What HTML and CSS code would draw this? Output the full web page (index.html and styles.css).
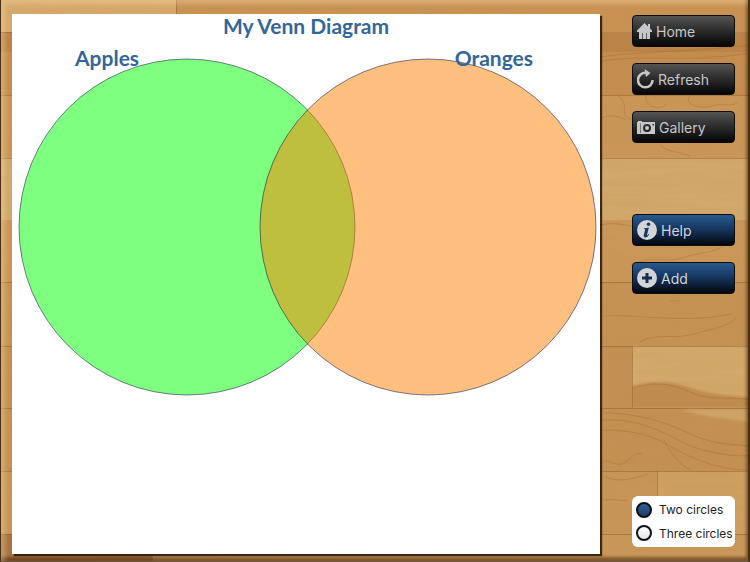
FILE: index.html
```
<!DOCTYPE html>
<html lang="en">
<head>
  <meta charset="utf-8">
  <meta name="viewport" content="width=device-width, initial-scale=1">
  <title>My Venn Diagram</title>
  <link rel="stylesheet" href="styles.css">
</head>
<body>
  <!-- Wooden desk -->
  <svg class="wood" viewBox="0 0 750 562" preserveAspectRatio="none" aria-hidden="true">
    <defs>
      <filter id="grain" x="0" y="0" width="100%" height="100%">
        <feTurbulence type="fractalNoise" baseFrequency="0.012 0.16" numOctaves="3" seed="4"/>
        <feColorMatrix values="0 0 0 0 0.5  0 0 0 0 0.27  0 0 0 0 0.08  0.9 0 0 0 -0.3"/>
      </filter>
      <filter id="soft" x="-5%" y="-5%" width="110%" height="110%"><feGaussianBlur stdDeviation="1"/></filter>
    </defs>
    <rect width="750" height="562" fill="#c69557"/>
    <rect width="176" height="32" fill="#d6a96c"/>
    <rect x="176" width="574" height="32" fill="#c89253"/>
    <rect y="32" width="750" height="20" fill="#bc8348"/>
    <rect y="52" width="750" height="43" fill="#c48d4f"/>
    <rect y="95" width="750" height="63" fill="#ca9658"/>
    <rect y="158" width="750" height="62" fill="#d2a96b"/>
    <rect y="220" width="750" height="62" fill="#ca9758"/>
    <rect y="282" width="750" height="64" fill="#c59254"/>
    <rect y="346" width="632" height="62" fill="#c38f52"/>
    <rect x="632" y="346" width="118" height="62" fill="#d2a96a"/>
    <path d="M632 386c22-6 38-5 56 1 20 7 40 9 62 10v11H632z" fill="#c08b50" filter="url(#soft)"/>
    <rect y="408" width="750" height="63" fill="#c49053"/>
    <path d="M680 409c22 8 46 10 70 12v-12z" fill="#cea566" filter="url(#soft)"/>
    <rect x="657" y="471" width="93" height="63" fill="#cda062"/>
    <rect y="534" width="152" height="28" fill="#a77240"/>
    <rect x="152" y="534" width="598" height="28" fill="#c89759"/>
    <rect width="750" height="562" filter="url(#grain)" opacity="0.3"/>
    <!-- plank joints -->
    <g fill="none" stroke="#74451d" stroke-opacity="0.35">
      <path d="M0 32.500H12M0 95.500H750M0 158.500H750M0 282.500H750M0 346.500H750M0 408.500H750M0 471.500H750M0 534.500H750M632.500 346V408M657.500 471V534M176.500 0V32M152.500 534V562"/>
    </g>
    <g fill="none" stroke="#9a5c28" stroke-opacity="0.3">
      <path d="M600 57c40-6 80-4 150-12M600 61c50-7 90 2 150-8M618 96c12 8 2 18 10 22s16-4 22 4M646 96c-2 10 14 16 20 8M690 96c-8 8 12 14 22 10s20 2 26-4M602 118c8-4 16-2 24 2M660 145c8 8 20 6 30 11"/>
      <path d="M600 225c20-4 24 2 40 1M630 266c20-12 36-2 52-8s32-4 44-14M640 342c18-10 34-2 54-8s32-6 42-16M602 316c40-2 80 8 130-2M670 301h10"/>
      <path d="M632 388c24-7 40-4 58 4s30 5 58 7"/>
      <path d="M602 412c32 2 60 8 84 20s40 12 64 14M602 420c32-2 58 10 76 20s44 16 70 16M602 430c26 0 48 4 64 14 24 14 52 26 82 26M664 440c6 12 14 24 28 31M602 462c6-4 12 4 20 2s12-14 20-10"/>
      <path d="M604 476c16 8 30 2 44-2M604 500c10-2 16 2 24 0"/>
    </g>
  </svg>

  <main class="board">
    <svg class="circles" viewBox="0 0 588 540" preserveAspectRatio="xMidYMin meet" role="img" aria-label="Two overlapping circles">
      <circle class="circle circle-a" cx="175" cy="213" r="168"/>
      <circle class="circle circle-b" cx="416" cy="213" r="168"/>
    </svg>
    <h1>My Venn Diagram</h1>
    <div class="labels">
      <h2>Apples</h2>
      <h2>Oranges</h2>
    </div>
  </main>

  <aside class="sidebar">
    <nav class="buttons">
      <button class="btn" type="button">
        <svg width="15" height="20" viewBox="0 0 15 20" aria-hidden="true"><path fill="currentColor" d="M7.500 2 0 9.500V11h2v7h3v-6h1v6h3v-6h1v6h3v-7h2V9.500l-2-2V3h-2v2.500z"/><path fill="currentColor" fill-opacity="0.4" d="M5 12h5v6H5z"/></svg>
        Home
      </button>
      <button class="btn" type="button">
        <svg width="17" height="20" viewBox="0 0 17 20" aria-hidden="true"><path fill="none" stroke="currentColor" stroke-width="2.500" d="M9 3.800A7.300 7.300 0 1 0 15.600 11"/><path fill="currentColor" d="M7.500 0l6 4-4.500 4z"/></svg>
        Refresh
      </button>
      <button class="btn" type="button">
        <svg width="18" height="20" viewBox="0 0 18 20" aria-hidden="true"><path fill="currentColor" fill-rule="evenodd" d="M0 5h1V4h4v1h13v12H0zM10 7a4 4 0 1 0 0 8 4 4 0 0 0 0-8zM3 6.500V16h.5V6.500zM15.500 7v1.500H17V7z"/><circle cx="10" cy="11" r="2" fill="currentColor"/></svg>
        Gallery
      </button>
    </nav>
    <div class="buttons">
      <button class="btn btn-blue" type="button">
        <svg width="20" height="20" viewBox="0 0 20 20" aria-hidden="true"><circle cx="10" cy="10" r="10" fill="currentColor"/><g fill="#173b63"><circle cx="11.500" cy="4.300" r="1.800"/><path d="M7 8.200c1.600 0 3.200-.3 4.800-.8L10 15c-.2.900.5.600 1.700-.9l.6.500c-1.300 2-2.600 2.800-4 2.800-1.500 0-1.900-1-1.500-2.500l1.200-4.700c.2-.8 0-1.100-1.200-1.200z"/></g></svg>
        Help
      </button>
      <button class="btn btn-blue" type="button">
        <svg width="20" height="20" viewBox="0 0 20 20" aria-hidden="true"><circle cx="10" cy="10" r="10" fill="currentColor"/><path d="M10 5v10M5 10h10" stroke="#132f50" stroke-width="3"/></svg>
        Add
      </button>
    </div>
    <div class="options" role="radiogroup" aria-label="Number of circles">
      <label><input type="radio" name="circles" value="2" checked>Two circles</label>
      <label><input type="radio" name="circles" value="3">Three circles</label>
    </div>
  </aside>
</body>
</html>
```
FILE: styles.css
```
:root {
  --ink: #336699;
  --font-ui: Inter, "Liberation Sans", sans-serif;
  --font-title: Lato, sans-serif;
}
*, *::before, *::after { box-sizing: border-box; }
body {
  position: relative;
  display: flex;
  gap: 32px;
  min-height: 100vh;
  margin: 0;
  padding: 14px 15px 8px 12px;
  font-family: var(--font-ui);
  background: #c49051;
}

/* bevelled edge of the desk */
body::after {
  content: "";
  position: absolute;
  inset: 0;
  border-left: 1px solid #46301c;
  border-right: 2px solid #46301c;
  border-bottom: 1px solid #6b5a45;
  box-shadow: inset 4px 4px 5px rgba(255, 225, 175, 0.35), inset -2px -4px 3px rgba(60, 30, 5, 0.5);
  pointer-events: none;
}
.wood { position: absolute; inset: 0; width: 100%; height: 100%; }

.board {
  position: relative;
  flex: 1;
  background: #fff;
  box-shadow: 2px 2px 1px rgba(35, 20, 10, 0.85);
}
.circles { position: absolute; inset: 0; width: 100%; height: 100%; }
.circle { stroke: rgba(0, 0, 60, 0.5); stroke-width: 1; }
.circle-a { fill: rgba(0, 255, 0, 0.5); }
.circle-b { fill: rgba(255, 128, 0, 0.5); }

h1, h2 {
  position: relative;
  margin: 0;
  font-family: var(--font-title);
  font-size: 21px;
  font-weight: 700;
  line-height: 24px;
  color: var(--ink);
}
h1 { text-align: center; }
.labels { display: flex; justify-content: space-between; padding: 8px 67px 0 63px; }

.sidebar { position: relative; display: flex; flex-direction: column; width: 103px; padding: 1px 0 7px; }
.buttons { display: flex; flex-direction: column; gap: 16px; }
.buttons + .buttons { margin-top: 71px; }
.btn {
  display: flex;
  align-items: center;
  gap: 4px;
  height: 32px;
  padding: 0 4px;
  border: 1px solid #0c0c0c;
  border-radius: 4px;
  background: linear-gradient(#545454, #2a2a2b 50%, #050505);
  color: #c6c7c9;
  font: 14px var(--font-ui);
  cursor: pointer;
}
.btn-blue { background: linear-gradient(#285a8e, #14335a 50%, #02060c); color: #d2d4d8; }

.options {
  display: flex;
  flex-direction: column;
  justify-content: space-around;
  height: 51px;
  margin-top: auto;
  padding: 2px 4px;
  border-radius: 6px;
  background: #fff;
}
.options label { display: flex; align-items: center; gap: 7px; font-size: 12px; color: #222; white-space: nowrap; }
.options input {
  flex: none;
  appearance: none;
  width: 16px;
  height: 16px;
  margin: 0;
  border: 2px solid #0c1118;
  border-radius: 50%;
  background: linear-gradient(#fff, #e4e4e4);
}
.options input:checked { background: linear-gradient(#2f5f92, #1c416b); }
```
